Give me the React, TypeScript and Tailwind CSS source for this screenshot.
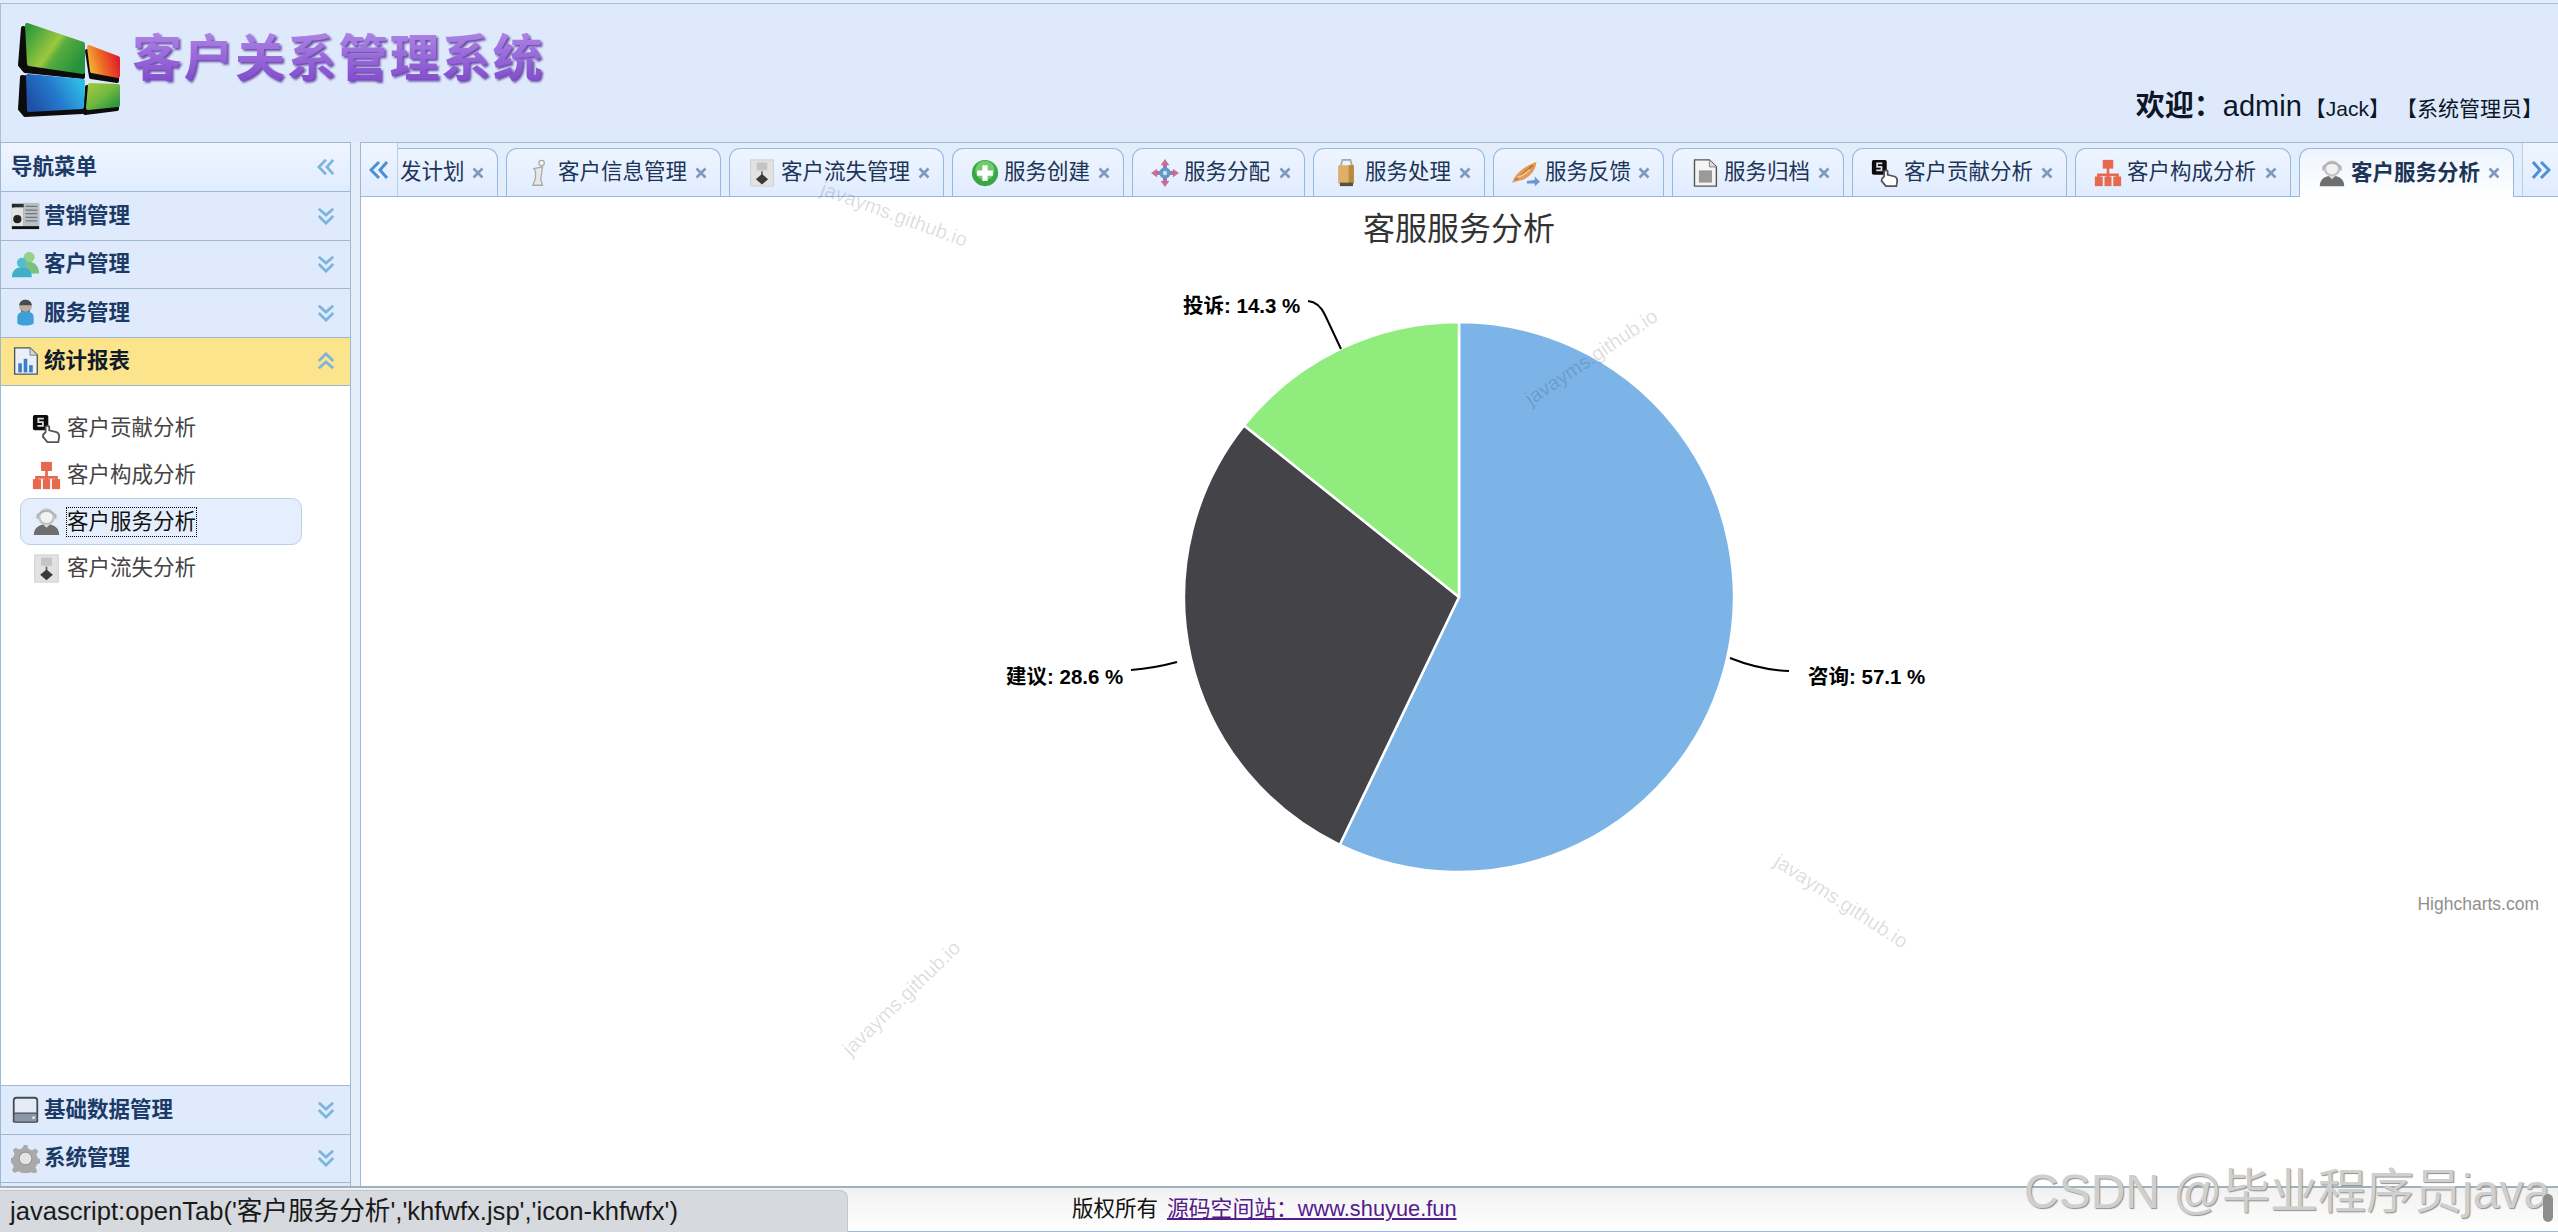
import React from 'react';

const sansFont = "font-['Liberation_Sans','Noto_Sans_CJK_SC',sans-serif]";

const DoubleChevron = ({ dir, className }: { dir: 'left' | 'right' | 'up' | 'down'; className: string }) => {
  const rotate = { down: 'rotate-0', up: 'rotate-180', left: 'rotate-90', right: '-rotate-90' }[dir];
  return (
    <svg viewBox="0 0 20 20" className={`${className} ${rotate}`} fill="none" stroke="currentColor" strokeWidth="3">
      <polyline points="2,2 10,9 18,2" />
      <polyline points="2,10 10,18 18,10" />
    </svg>
  );
};

const Logo = () => (
  <svg viewBox="0 0 104 96" className="w-[104px] h-[96px]">
    <defs>
      <linearGradient id="lg1" x1="0" y1="0.1" x2="1" y2="0.7">
        <stop offset="0" stopColor="#2f9a3c" />
        <stop offset="0.5" stopColor="#9cc83f" />
        <stop offset="0.62" stopColor="#58ad3e" />
        <stop offset="1" stopColor="#27923c" />
      </linearGradient>
      <linearGradient id="lg2" x1="0" y1="0.7" x2="1" y2="0.4">
        <stop offset="0" stopColor="#f2b53a" />
        <stop offset="0.45" stopColor="#ee6a24" />
        <stop offset="1" stopColor="#df1f2b" />
      </linearGradient>
      <linearGradient id="lg3" x1="0" y1="0.7" x2="1" y2="0.35">
        <stop offset="0" stopColor="#1f4fa6" />
        <stop offset="0.5" stopColor="#2579cc" />
        <stop offset="1" stopColor="#2dbbe6" />
      </linearGradient>
      <linearGradient id="lg4" x1="0" y1="0" x2="1" y2="1">
        <stop offset="0" stopColor="#a3c93c" />
        <stop offset="0.5" stopColor="#6fb840" />
        <stop offset="1" stopColor="#229040" />
      </linearGradient>
    </defs>
    <g fill="#0c0c0c" stroke="#0c0c0c" strokeWidth="4" strokeLinejoin="round">
      <path d="M6 5 L66 25 L66 54 L8 48 L3 42 Z" />
      <path d="M70 28 L100 38 L100 58 L74 54 Z" />
      <path d="M5 54 L65 60 L65 89 L8 92 L3 86 Z" />
      <path d="M70 64 L100 64 L100 86 L68 90 Z" />
    </g>
    <g strokeWidth="4" strokeLinejoin="round">
      <path d="M10 2 L66 21 L66 49 L12 41 Z" fill="url(#lg1)" stroke="url(#lg1)" />
      <path d="M72 24 L101 35 L101 53 L75 48 Z" fill="url(#lg2)" stroke="url(#lg2)" />
      <path d="M11 53 L66 58 L65 84 L12 87 Z" fill="url(#lg3)" stroke="url(#lg3)" />
      <path d="M73 62 L101 63 L101 82 L71 85 Z" fill="url(#lg4)" stroke="url(#lg4)" />
    </g>
  </svg>
);

const icons: Record<string, React.ReactNode> = {
  server: (
    <>
      <rect x="1" y="3" width="30" height="27" fill="#2b2f33" />
      <rect x="14" y="2" width="17" height="26" fill="#b9bfc4" />
      <path d="M16 6h13M16 10h13M16 14h13M16 18h13M16 22h13" stroke="#70777c" strokeWidth="1.5" />
      <rect x="1" y="7" width="13" height="21" fill="#e2e2e2" />
      <circle cx="7" cy="20" r="4.5" fill="#222" />
      <rect x="1" y="4" width="3" height="3" fill="#222" />
      <rect x="1" y="28" width="30" height="3" fill="#111" />
    </>
  ),
  users: (
    <>
      <circle cx="20" cy="8" r="6" fill="#98d08a" />
      <path d="M10 26c0-9 5-13 10-13s11 4 11 13z" fill="#7cc07f" />
      <circle cx="12" cy="14" r="5.5" fill="#55bcd0" />
      <path d="M1 30c0-8 5-11 11-11s11 3 11 11z" fill="#3fb0c8" />
    </>
  ),
  service: (
    <>
      <circle cx="16" cy="9" r="7" fill="#b9aca0" />
      <path d="M9 8c1-8 13-8 14 0z" fill="#4a4a4a" />
      <path d="M11 13q5 5 10 0l-1 5h-8z" fill="#5c5c5c" />
      <path d="M7 28v-7c0-4 4-6 9-6s9 2 9 6v7c-3 3-15 3-18 0z" fill="#3f9fd8" />
    </>
  ),
  report: (
    <>
      <path d="M4 1h17l8 8v21H4z" fill="#e9f0f8" stroke="#4e5560" strokeWidth="1.5" />
      <path d="M21 1v8h8" fill="#cfd8e4" stroke="#777" />
      <rect x="8" y="18" width="4" height="10" fill="#3d7ec8" />
      <rect x="14" y="13" width="4" height="15" fill="#3d7ec8" />
      <rect x="20" y="20" width="4" height="8" fill="#3d7ec8" />
    </>
  ),
  contribute: (
    <>
      <rect x="1" y="1" width="17" height="17" rx="2" fill="#0c0c0c" />
      <path d="M13 5H7v4h5v4H6" fill="none" stroke="#ddd" strokeWidth="2" />
      <path d="M15 20v-6q3-2 4 0v4l8 2q3 1 3 5l-1 6H17l-5-6q0-3 3-5z" fill="#fff" stroke="#555" strokeWidth="2" />
    </>
  ),
  org: (
    <>
      <rect x="10" y="1" width="12" height="10" fill="#e8684e" />
      <path d="M16 10v8M5 22v-4h22v4M16 16v6" stroke="#e8684e" strokeWidth="3" fill="none" />
      <rect x="1" y="20" width="9" height="11" fill="#e8684e" />
      <rect x="12" y="20" width="8" height="11" fill="#e8684e" />
      <rect x="22" y="20" width="9" height="11" fill="#e8684e" />
    </>
  ),
  headset: (
    <>
      <circle cx="16" cy="11" r="8" fill="#f2f2f2" stroke="#c2c2c2" strokeWidth="2.5" />
      <path d="M6 13v-4q10-9 20 0v4" fill="none" stroke="#b0b0b0" strokeWidth="2" />
      <path d="M2 31c0-9 7-12 14-12s14 3 14 12z" fill="#6e6e6e" />
      <path d="M12 19l4 4 4-4z" fill="#ddd" />
    </>
  ),
  loss: (
    <>
      <rect x="3" y="1" width="26" height="30" fill="#e2e2e2" stroke="#cdcdcd" />
      <rect x="10" y="4" width="12" height="9" fill="#c4c4c4" />
      <path d="M16 14v4" stroke="#666" strokeWidth="2" />
      <path d="M16 17l7 6-7 6-7-6z" fill="#3a3a3a" />
    </>
  ),
  info: (
    <>
      <circle cx="19" cy="4.5" r="3" fill="#fff" stroke="#aaa" strokeWidth="1.5" />
      <path d="M10 11l10-2-2 14 2 7H9l3-8 0-8z" fill="#e8e8e8" stroke="#aaa" strokeWidth="1.5" />
    </>
  ),
  plus: (
    <>
      <circle cx="16" cy="16" r="15" fill="#39a844" />
      <circle cx="16" cy="13" r="11" fill="#6fcb6c" />
      <path d="M16 7v18M7 16h18" stroke="#fff" strokeWidth="6" />
    </>
  ),
  move: (
    <>
      <path d="M16 0l5 7H11zM16 32l5-7H11zM0 16l7-5v10zM32 16l-7-5v10z" fill="#c96f93" />
      <path d="M16 6v20M6 16h20" stroke="#b0709c" strokeWidth="4.5" />
      <circle cx="16" cy="16" r="6.5" fill="#5f97cf" />
      <circle cx="16" cy="16" r="2.5" fill="#cfe0f2" />
    </>
  ),
  handle: (
    <>
      <path d="M10 8l2-7h9l2 7" fill="none" stroke="#a8a8a8" strokeWidth="2" />
      <rect x="7" y="7" width="18" height="21" rx="1" fill="#dcb06a" />
      <rect x="19" y="7" width="6" height="21" fill="#b78a3e" />
      <rect x="9" y="27" width="15" height="4" fill="#55503f" />
    </>
  ),
  feather: (
    <>
      <path d="M0 27Q5 12 28 3q-1 13-14 20z" fill="#e39a55" />
      <path d="M4 24L24 7" stroke="#b16b2e" strokeWidth="1.5" />
      <path d="M6 21q8-2 14-9" stroke="#f5c78f" strokeWidth="2" fill="none" />
      <path d="M17 25l9-1 0-4 6 6-6 5 0-3-9 0z" fill="#6a96d2" />
    </>
  ),
  doc: (
    <>
      <path d="M4 1h17l8 8v22H4z" fill="#f4f4f4" stroke="#555" strokeWidth="1.6" />
      <path d="M21 1v8h8" fill="#ddd" stroke="#777" />
      <rect x="9" y="13" width="15" height="14" fill="#9a9a9a" />
    </>
  ),
  drive: (
    <>
      <path d="M6 3h20q3 0 3 3v23H3V6q0-3 3-3z" fill="#e4ebf4" stroke="#444c55" strokeWidth="2" />
      <rect x="3" y="20" width="26" height="10" rx="2" fill="#8a97a6" stroke="#444c55" strokeWidth="1.5" />
      <circle cx="25" cy="25" r="1.5" fill="#eee" />
    </>
  ),
  gear: (
    <>
      <path
        d="M14 1h4l1 4 4 2 4-2 3 3-2 4 2 4 3 1v4l-4 1-2 4 2 4-3 3-4-2-4 2-1 3h-4l-1-4-4-2-4 2-3-3 2-4-2-4-3-1v-4l4-1 2-4-2-4 3-3 4 2 4-2z"
        fill="#a9a9a9"
      />
      <circle cx="16" cy="16" r="7" fill="#e4e4e4" stroke="#8a8a8a" />
    </>
  ),
};

const Icon = ({ name, className }: { name: string; className: string }) => (
  <svg viewBox="0 0 32 32" className={className}>
    {icons[name]}
  </svg>
);

const Close = () => (
  <svg viewBox="0 0 12 12" className="w-[12px] h-[12px] ml-auto mr-[13px] shrink-0" stroke="#7f98bd" strokeWidth="2.6">
    <path d="M1.5 1.5l9 9M10.5 1.5l-9 9" />
  </svg>
);

const tabs = [
  { label: '客户信息管理', icon: 'info', width: 'w-[215px]' },
  { label: '客户流失管理', icon: 'loss', width: 'w-[215px]' },
  { label: '服务创建', icon: 'plus', width: 'w-[172px]' },
  { label: '服务分配', icon: 'move', width: 'w-[173px]' },
  { label: '服务处理', icon: 'handle', width: 'w-[172px]' },
  { label: '服务反馈', icon: 'feather', width: 'w-[171px]' },
  { label: '服务归档', icon: 'doc', width: 'w-[172px]' },
  { label: '客户贡献分析', icon: 'contribute', width: 'w-[215px]' },
  { label: '客户构成分析', icon: 'org', width: 'w-[216px]' },
];

const tabClass =
  'h-[48px] flex items-center rounded-t-[11px] border border-b-0 border-[#95b8e7] bg-gradient-to-b from-[#eff5ff] to-[#e0ecff] text-[21.5px] text-[#1c3557] shrink-0';

const SideRow = ({ icon, label, active }: { icon: string; label: string; active?: boolean }) => (
  <div
    className={`h-[48.5px] flex items-center border-b border-[#9db8d2] pl-[10px] pr-[15px] font-bold text-[21.5px] ${
      active ? 'bg-[#fce48d] text-[#101b2c]' : 'bg-[#dfebfc] text-[#1c3a66]'
    }`}
  >
    <Icon name={icon} className="w-[29px] h-[29px] mr-[4px]" />
    <span>{label}</span>
    <DoubleChevron dir={active ? 'up' : 'down'} className="w-[18px] h-[18px] ml-auto text-[#7db4de]" />
  </div>
);

const MenuItem = ({ icon, label, selected }: { icon: string; label: string; selected?: boolean }) => (
  <div
    className={`h-[46.7px] w-[282px] flex items-center pl-[11px] rounded-[10px] text-[21.5px] ${
      selected ? 'bg-[#e4eefc] border border-[#b9d0e8] text-[#111]' : 'border border-transparent text-[#444]'
    }`}
  >
    <Icon name={icon} className="w-[29px] h-[29px] mr-[6px] shrink-0" />
    <span className={selected ? 'outline-1 outline-dotted outline-black leading-[28px]' : ''}>{label}</span>
  </div>
);

const Watermark = ({ className }: { className: string }) => (
  <span className={`absolute text-[20px] text-black/15 whitespace-nowrap ${className}`}>javayms.github.io</span>
);

const PieChart = () => {
  const cx = 1459;
  const cy = 597;
  const r = 275;
  const point = (deg: number) => {
    const a = (deg * Math.PI) / 180;
    return `${cx + r * Math.sin(a)} ${cy - r * Math.cos(a)}`;
  };
  const slice = (from: number, to: number) =>
    `M${cx} ${cy} L${point(from)} A${r} ${r} 0 ${to - from > 180 ? 1 : 0} 1 ${point(to)} Z`;
  return (
    <svg viewBox="361 197 2197 989" className="w-full h-full">
      <text x="1459" y="240" textAnchor="middle" fontSize="32" fill="#333">
        客服服务分析
      </text>
      <g stroke="#fff" strokeWidth="2.5" strokeLinejoin="round">
        <path d={slice(0, 205.7)} fill="#7cb4e8" />
        <path d={slice(205.7, 308.6)} fill="#434348" />
        <path d={slice(308.6, 360)} fill="#90ed7d" />
      </g>
      <g fill="none" stroke="#000" strokeWidth="2">
        <path d="M1308 301 Q1319 302 1325 315 L1341 349" />
        <path d="M1131 670 Q1155 668 1177 662" />
        <path d="M1730 658 Q1760 670 1789 671" />
      </g>
      <g fontSize="20.5" fontWeight="700" fill="#000">
        <text x="1183" y="313">投诉: 14.3 %</text>
        <text x="1006" y="684">建议: 28.6 %</text>
        <text x="1808" y="684">咨询: 57.1 %</text>
      </g>
      <text x="2539" y="910" textAnchor="end" fontSize="17.5" fill="#909090">
        Highcharts.com
      </text>
    </svg>
  );
};

export default function App() {
  return (
    <div className={`relative w-[2558px] h-[1232px] overflow-hidden flex flex-col bg-[#e0ecff] ${sansFont}`}>
      {/* Top banner */}
      <div className="h-[139px] mt-[3px] border-t border-l border-[#a9c0cf] flex items-start pl-[16px] shrink-0 bg-[#deeafc]">
        <div className="mt-[19px]">
          <Logo />
        </div>
        <div className="mt-[21px] ml-[11px] text-[50px] font-bold tracking-[1.5px] leading-[68px] bg-gradient-to-b from-[#b48ce8] to-[#7a3cc6] bg-clip-text text-transparent drop-shadow-[2px_2px_1px_#6b4aa8]">
          客户关系管理系统
        </div>
        <div className="ml-auto mt-[81px] mr-[15px] flex items-baseline text-[#0d1626]">
          <span className="text-[29px] font-bold">欢迎：</span>
          <span className="text-[29px] mr-[3px]">admin</span>
          <span className="text-[21px] mr-[6px]">【Jack】</span>
          <span className="text-[21px]">【系统管理员】</span>
        </div>
      </div>

      <div className="flex-1 flex min-h-0">
        {/* Left navigation */}
        <aside className="w-[351px] shrink-0 flex flex-col border-l border-r border-t border-[#9db8d2] bg-white">
          <div className="h-[49px] flex items-center border-b border-[#9db8d2] pl-[10px] pr-[15px] font-bold text-[21.5px] text-[#1c3a66] bg-gradient-to-b from-[#eff5ff] to-[#e0ecff]">
            <span>导航菜单</span>
            <DoubleChevron dir="left" className="w-[18px] h-[18px] ml-auto text-[#7db4de]" />
          </div>
          <SideRow icon="server" label="营销管理" />
          <SideRow icon="users" label="客户管理" />
          <SideRow icon="service" label="服务管理" />
          <SideRow icon="report" label="统计报表" active />
          <div className="flex-1 pt-[19px] pl-[19px]">
            <MenuItem icon="contribute" label="客户贡献分析" />
            <MenuItem icon="org" label="客户构成分析" />
            <MenuItem icon="headset" label="客户服务分析" selected />
            <MenuItem icon="loss" label="客户流失分析" />
          </div>
          <div className="border-t border-[#9db8d2] bg-[#dfebfc] pb-[3px]">
            <SideRow icon="drive" label="基础数据管理" />
            <SideRow icon="gear" label="系统管理" />
          </div>
        </aside>

        <div className="w-[9px] shrink-0 bg-[#e4eefa]" />

        {/* Tabs and chart */}
        <main className="flex-1 min-w-0 flex flex-col border-l border-t border-[#9db8d2] bg-white">
          <div className="h-[54px] shrink-0 flex items-end border-b border-[#95b8e7] bg-[#e3eefc] gap-[8px]">
            <div className="w-[37px] h-[53px] -mr-[8px] flex items-center justify-center border-r border-[#b7cfe8] bg-gradient-to-b from-[#eff5ff] to-[#e0ecff] shrink-0">
              <DoubleChevron dir="left" className="w-[20px] h-[20px] text-[#4c90d2]" />
            </div>
            <div className={`${tabClass} w-[100px] rounded-tl-none border-l-0 pl-[2px]`}>
              <span>发计划</span>
              <Close />
            </div>
            {tabs.map((tab) => (
              <div key={tab.label} className={`${tabClass} ${tab.width}`}>
                <span className="w-[51px] pl-[18px] shrink-0">
                  <Icon name={tab.icon} className="w-[28px] h-[28px]" />
                </span>
                <span>{tab.label}</span>
                <Close />
              </div>
            ))}
            <div className="relative h-[49px] w-[215px] -mb-px flex items-center rounded-t-[11px] border border-b-0 border-[#95b8e7] bg-gradient-to-b from-[#eef4fd] to-white text-[21.5px] font-bold text-[#1c3557] shrink-0">
              <span className="w-[51px] pl-[18px] shrink-0">
                <Icon name="headset" className="w-[28px] h-[28px]" />
              </span>
              <span>客户服务分析</span>
              <Close />
            </div>
            <div className="flex-1 h-[53px] flex items-center justify-center border-l border-[#b7cfe8] bg-gradient-to-b from-[#eff5ff] to-[#e0ecff]">
              <DoubleChevron dir="right" className="w-[20px] h-[20px] text-[#4c90d2]" />
            </div>
          </div>
          <div className="flex-1 min-h-0">
            <PieChart />
          </div>
        </main>
      </div>

      {/* Footer */}
      <footer className="h-[46px] shrink-0 flex items-center pl-[1072px] border-t-2 border-b border-t-[#9db2bd] border-b-[#95b8e7] bg-gradient-to-b from-[#f1f1f1] to-white text-[21.5px] text-[#111]">
        <span>版权所有</span>
        <span className="ml-[9px] text-[21.8px] text-[#551a8b] underline">源码空间站：www.shuyue.fun</span>
      </footer>

      {/* Things lying over the page */}
      <Watermark className="left-[817px] top-[199px] rotate-[20deg]" />
      <Watermark className="left-[1514px] top-[342px] -rotate-[34deg]" />
      <Watermark className="left-[1764px] top-[886px] rotate-[33deg]" />
      <Watermark className="left-[824px] top-[983px] -rotate-[44deg]" />
      <div className="absolute left-0 bottom-0 w-[848px] h-[42px] rounded-tr-[8px] border-t border-r border-[#c2c5c9] bg-[#d6d9dd] flex items-center pl-[10px] text-[25.6px] text-[#1a1a1a] whitespace-nowrap">
        javascript:openTab('客户服务分析','khfwfx.jsp','icon-khfwfx')
      </div>
      <div className="absolute left-[2024px] top-[1156px] text-[48px] text-[#cfcfcf] whitespace-nowrap [text-shadow:1px_1px_1px_#8f8f8f]">
        CSDN @毕业程序员java
      </div>
      <div className="absolute left-[2543px] top-[1194px] w-[10px] h-[28px] rounded-full bg-[#8d8d8d]" />
    </div>
  );
}
